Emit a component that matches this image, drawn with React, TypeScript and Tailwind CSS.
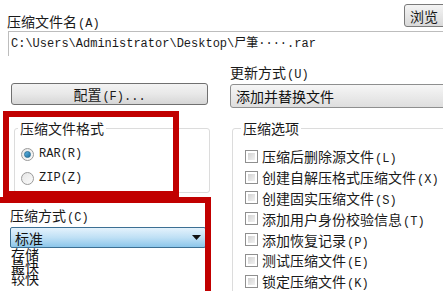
import React from "react";

const cjk = "font-['Noto_Sans_CJK_SC',sans-serif]";

function Label({ zh, en }: { zh: string; en?: string }) {
  return (
    <span className={`${cjk} block h-[20px] whitespace-nowrap text-[14px] leading-[20px] text-[#1a1a1a]`}>
      {zh}
      {en && (
        <span className="font-['Liberation_Mono',monospace] text-[12px] leading-none ml-[1px]">
          {en}
        </span>
      )}
    </span>
  );
}

function Radio({ checked }: { checked?: boolean }) {
  return (
    <span className="w-[13px] h-[13px] rounded-full border border-[#9a9a9a] bg-gradient-to-br from-[#e6e6e6] to-[#fbfbfb] flex items-center justify-center shrink-0">
      {checked && (
        <span className="w-[7px] h-[7px] rounded-full bg-gradient-to-br from-[#5fb6e6] to-[#1c6f9e] border border-[#2a6f95]" />
      )}
    </span>
  );
}

function Check() {
  return (
    <span className="w-[13px] h-[13px] border border-[#8f8f8f] bg-white p-[2px] shrink-0">
      <span className="block w-full h-full bg-gradient-to-br from-[#d2d2d2] to-[#f2f2f2]" />
    </span>
  );
}

const options: [string, string][] = [
  ["压缩后删除源文件", "(L)"],
  ["创建自解压格式压缩文件", "(X)"],
  ["创建固实压缩文件", "(S)"],
  ["添加用户身份校验信息", "(T)"],
  ["添加恢复记录", "(P)"],
  ["测试压缩文件", "(E)"],
  ["锁定压缩文件", "(K)"],
];

export default function App() {
  return (
    <div className="relative w-[443px] h-[291px] bg-white overflow-hidden leading-[20px] text-[14px]">
      {/* 文件名 */}
      <div className="flex items-start justify-between pl-[7px] pt-[4px] h-[31px]">
        <div className="pt-[7px]">
          <Label zh="压缩文件名" en="(A)" />
        </div>
        <div className="w-[44px] h-[23px] -mr-[5px] border border-[#7a7a7a] rounded-[3px] bg-gradient-to-b from-[#f4f4f4] to-[#d9d9d9] flex items-center pl-[5px]">
          <span className={`${cjk} text-[14px] leading-none text-[#1a1a1a]`}>浏览</span>
        </div>
      </div>
      <div className="ml-[8px] h-[25px] border-t border-l border-[#bdbdbd] flex items-center pl-[2px]">
        <span className="font-['Liberation_Mono','Noto_Sans_CJK_SC',monospace] text-[12px] leading-none text-[#1a1a1a] whitespace-nowrap">
          C:\Users\Administrator\Desktop\尸筆····.rar
        </span>
      </div>

      <div className="flex">
        {/* 左列 */}
        <div className="w-[230px] shrink-0 pl-[10px] flex flex-col">
          <div className="mt-[27px] ml-[1px] w-[197px] h-[22px] border border-[#707070] rounded-[3px] bg-gradient-to-b from-[#f3f3f3] via-[#e8e8e8] to-[#d6d6d6] flex items-center justify-center">
            <Label zh="配置" en="(F)..." />
          </div>
          <fieldset className="mt-[13px] ml-[4px] w-[196px] h-[75px] border border-[#dcdcdc] rounded-[3px] pl-[6px]">
            <legend className="px-[2px] -ml-[3px]">
              <Label zh="压缩文件格式" />
            </legend>
            <div className="flex items-center gap-[5px] mt-[6px] h-[20px]">
              <Radio checked />
              <span className="font-['Liberation_Mono',monospace] text-[12px] text-[#1a1a1a]">RAR(R)</span>
            </div>
            <div className="flex items-center gap-[5px] mt-[4px] h-[20px]">
              <Radio />
              <span className="font-['Liberation_Mono',monospace] text-[12px] text-[#1a1a1a]">ZIP(Z)</span>
            </div>
          </fieldset>
          <div className="mt-[12px]">
            <Label zh="压缩方式" en="(C)" />
          </div>
          <div className="mt-[2px] w-[196px] h-[21px] border border-[#3c6f93] rounded-[2px] bg-gradient-to-b from-[#e4f2fc] via-[#bfe0f5] to-[#8cc6ea] flex items-center justify-between pl-[4px] pr-[4px]">
            <span className={`${cjk} text-[14px] leading-none text-[#111]`}>标准</span>
            <svg width="9" height="5" viewBox="0 0 9 5">
              <path d="M0 0H9L4.5 5Z" fill="#111" />
            </svg>
          </div>
          <div className={`${cjk} text-[14px] leading-[12px] text-[#111] pl-[1px]`}>
            <div>存储</div>
            <div>最快</div>
            <div>较快</div>
          </div>
        </div>

        {/* 右列 */}
        <div className="flex-1 flex flex-col">
          <div className="mt-[6px]">
            <Label zh="更新方式" en="(U)" />
          </div>
          <div className="mt-[2px] h-[24px] -mr-[6px] border border-[#8e8f8f] rounded-[3px] bg-gradient-to-b from-[#f6f6f6] to-[#dedede] flex items-center pl-[5px]">
            <span className={`${cjk} text-[14px] leading-none text-[#111]`}>添加并替换文件</span>
          </div>
          <fieldset className="mt-[10px] ml-[2px] -mr-[20px] h-[200px] border border-[#dcdcdc] rounded-[3px] pl-[12px]">
            <legend className="px-[2px] -ml-[4px]">
              <Label zh="压缩选项" />
            </legend>
            <div className="mt-[8px] flex flex-col">
              {options.map(([zh, en]) => (
                <div key={en} className="h-[20.8px] flex items-center gap-[4px]">
                  <Check />
                  <Label zh={zh} en={en} />
                </div>
              ))}
            </div>
          </fieldset>
        </div>
      </div>

      {/* 标注框 */}
      <div className="absolute left-[3px] top-[111px] w-[176px] h-[86px] border-[6px] border-[#c10000]" />
      <div className="absolute -left-[10px] top-[197px] w-[221px] h-[120px] border-[6px] border-[#c10000]" />
    </div>
  );
}
